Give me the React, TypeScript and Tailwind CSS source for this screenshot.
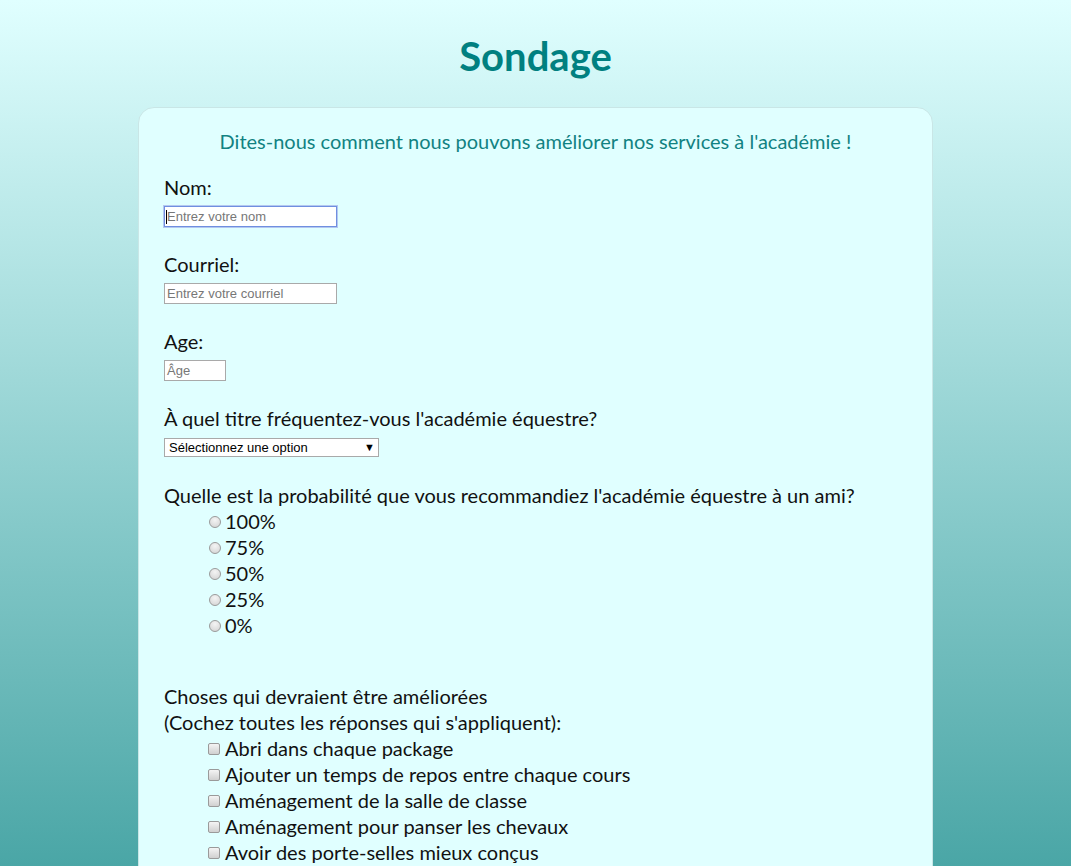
import React from "react";

const radios = ["100%", "75%", "50%", "25%", "0%"];
const checks = [
  "Abri dans chaque package",
  "Ajouter un temps de repos entre chaque cours",
  "Aménagement de la salle de classe",
  "Aménagement pour panser les chevaux",
  "Avoir des porte-selles mieux conçus",
];

const TextBox: React.FC<{ placeholder: string; w: string; focused?: boolean }> = ({ placeholder, w, focused }) => (
  <div
    className={`relative h-[21px] ${w} bg-white flex items-center px-[2px] text-[13px] leading-none text-[#777] font-['Liberation_Sans',Arial,sans-serif] ${
      focused ? "border border-[#6f8fe0] shadow-[0_0_0_1px_#b4c8f0]" : "border border-[#a9a9a9]"
    }`}
  >
    {focused && <span className="absolute left-[1px] top-[3px] h-[14px] w-px bg-black" />}
    {placeholder}
  </div>
);

const Radio = () => (
  <span className="inline-block w-[12px] h-[12px] rounded-full border border-[#9a9a9a] bg-[radial-gradient(circle_at_50%_30%,#f4f4f4,#d2d2d2)] mr-[4px] translate-y-[1px]" />
);

const Check = () => (
  <span className="inline-block w-[12px] h-[12px] rounded-[2px] border border-[#9a9a9a] bg-[linear-gradient(#f4f4f4,#d0d0d0)] mr-[5px] translate-y-[1px]" />
);

export default function App() {
  return (
    <div className="min-h-screen bg-[linear-gradient(#e0ffff,#4aa6a6)] bg-fixed font-['Lato',sans-serif] text-[#111]">
      <h1 className="text-center text-[40px] font-bold text-[#008080] pt-[26px] pb-[21px] leading-[60px]">Sondage</h1>
      <div className="mx-auto w-[795px] bg-[#e0ffff] rounded-[16px] border border-[#c9e6e6] px-[25px] pt-[19px] pb-10">
        <p className="text-center text-[20px] text-[#118282] leading-[28px]">
          Dites-nous comment nous pouvons améliorer nos services à l'académie !
        </p>
        <div className="mt-[19px] flex flex-col text-[20px]">
          <div className="leading-[26px]">Nom:</div>
          <div className="mt-[6px]">
            <TextBox placeholder="Entrez votre nom" w="w-[173px]" focused />
          </div>

          <div className="leading-[26px] mt-[24px]">Courriel:</div>
          <div className="mt-[6px]">
            <TextBox placeholder="Entrez votre courriel" w="w-[173px]" />
          </div>

          <div className="leading-[26px] mt-[24px]">Age:</div>
          <div className="mt-[6px]">
            <TextBox placeholder="Âge" w="w-[62px]" />
          </div>

          <div className="leading-[26px] mt-[24px]">À quel titre fréquentez-vous l'académie équestre?</div>
          <div className="mt-[7px] w-[215px] h-[19px] bg-white border border-[#a9a9a9] flex items-center justify-between pl-[4px] pr-[3px] text-[13px] leading-none text-black font-['Liberation_Sans',Arial,sans-serif]">
            <span>Sélectionnez une option</span>
            <span className="text-[11px]">▼</span>
          </div>

          <div className="leading-[26px] mt-[25px]">
            Quelle est la probabilité que vous recommandiez l'académie équestre à un ami?
          </div>
          <div className="pl-[45px] flex flex-col">
            {radios.map((r) => (
              <label key={r} className="leading-[26px] flex items-center">
                <Radio />
                {r}
              </label>
            ))}
          </div>

          <div className="leading-[26px] mt-[45px]">
            Choses qui devraient être améliorées
            <br />
            (Cochez toutes les réponses qui s'appliquent):
          </div>
          <div className="pl-[44px] flex flex-col">
            {checks.map((c) => (
              <label key={c} className="leading-[26px] flex items-center">
                <Check />
                {c}
              </label>
            ))}
          </div>
        </div>
      </div>
    </div>
  );
}
